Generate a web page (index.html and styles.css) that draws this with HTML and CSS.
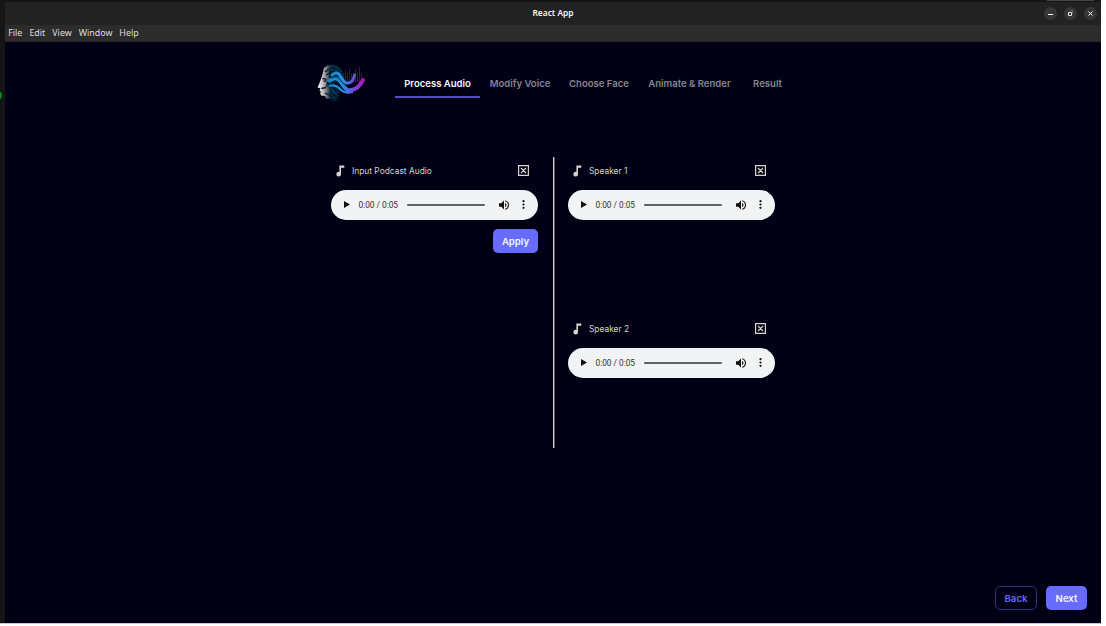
FILE: index.html
```html
<!DOCTYPE html>
<html lang="en">
<head>
<meta charset="utf-8">
<title>React App</title>
<link rel="stylesheet" href="styles.css">
</head>
<body>
<svg class="defs" width="0" height="0">
  <symbol id="note" viewBox="0 0 9 12"><path d="M3.4 0.4H8.3V2.8H5V9a2.3 2.3 0 1 1-1.6-2.1z"/></symbol>
  <symbol id="close" viewBox="0 0 11 11"><path d="M.6.6h9.8v9.8H.6zM3 3l5 5M8 3l-5 5" fill="none" stroke="currentColor" stroke-width="1.2"/></symbol>
  <symbol id="play" viewBox="0 0 6 7"><path d="M0 0l6 3.5L0 7z"/></symbol>
  <symbol id="volume" viewBox="3 3 18 18"><path d="M3 9v6h4l5 5V4L7 9H3zm13.5 3A4.5 4.5 0 0 0 14 7.97v8.05A4.5 4.5 0 0 0 16.5 12zM14 3.23v2.06a7 7 0 0 1 0 13.42v2.06a9 9 0 0 0 0-17.54z"/></symbol>
  <symbol id="more" viewBox="0 0 3 9"><circle cx="1.5" cy="1.2" r="1.1"/><circle cx="1.5" cy="4.5" r="1.1"/><circle cx="1.5" cy="7.8" r="1.1"/></symbol>
</svg>
<div class="desktop">
  <i class="dock-dot"></i>
  <i class="top-chip"></i>
  <div class="window">
    <header class="titlebar">
      <span class="title">React App</span>
      <div class="controls">
        <span class="control"><svg width="13" height="13" viewBox="0 0 13 13"><path d="M4 7.5h5" stroke="#fff" fill="none"/></svg></span>
        <span class="control"><svg width="13" height="13" viewBox="0 0 13 13"><path d="M4.5 5.5h3v3h-3z" stroke="#ddd" fill="none"/><path d="M6 3.5h2.5V7" stroke="#666" fill="none"/></svg></span>
        <span class="control"><svg width="13" height="13" viewBox="0 0 13 13"><path d="M4.5 4.5l4 4M8.5 4.5l-4 4" stroke="#fff" fill="none"/></svg></span>
      </div>
    </header>
    <nav class="menubar"><span>File</span><span>Edit</span><span>View</span><span>Window</span><span>Help</span></nav>
    <main class="app">
      <div class="steps">
        <svg class="logo" width="48" height="38" viewBox="0 0 48 38">
          <defs>
            <linearGradient id="wave" x1="12" y1="0" x2="47" y2="0" gradientUnits="userSpaceOnUse"><stop offset="0" stop-color="#0c8fc4"/><stop offset=".4" stop-color="#268fe4"/><stop offset=".68" stop-color="#6a50dc"/><stop offset="1" stop-color="#b010ae"/></linearGradient>
            <linearGradient id="face" x1="2" y1="0" x2="15" y2="0" gradientUnits="userSpaceOnUse"><stop offset="0" stop-color="#eee"/><stop offset=".45" stop-color="#9b9ea3"/><stop offset=".85" stop-color="#1a2c3c"/></linearGradient>
          </defs>
          <path d="M7 4Q11-1 17 .5q8 1 9 10l-1 13-3 8-1 5-6 1-5-6z" fill="#061b2e"/>
          <path d="M7 4Q10 .5 14 1l-2 8 1 6-2 5 2 6-1 4 2 5-5-.5-1-2.500-3.500-.3-1.300-2 .6-2-1.300-1.500 1-2-3-.8 2.200-5L5 12z" fill="url(#face)"/>
          <path d="M5.500 14.500l4 .8M6.500 17h3M4.500 24.500l4.500-1M8 29l4 2M8 8l4-3M9 11l4-2M10.500 18l-1 5" stroke="#10131d" stroke-width="1.300" fill="none"/>
          <path d="M13 3q7-2 11 5M14 6q7-1 10 5M12 26q2 6 6 8M16 26q1 4 4 5M14 24q2 6 6 5" stroke="#125273" stroke-width="1" fill="none" stroke-dasharray="2 .7"/>
          <path d="M26.500 9v7M28.500 6v10M30.500 9v9M32.500 5v12M34.500 9v8" stroke="#0a3c63" stroke-width=".8" fill="none"/>
          <path d="M36.500 9v9M38.500 5v13M40.500 9v9M42.500 3v16M44.500 9v8" stroke="#541069" stroke-width=".8" fill="none"/>
          <path d="M15 11Q20 6 24 13t7 6q5 0 6.500-8" stroke="url(#wave)" stroke-width="3" fill="none" stroke-linecap="round"/>
          <path d="M13 16.500Q20 11 25 19.500t9 6.500q8-1 12-10" stroke="url(#wave)" stroke-width="4" fill="none" stroke-linecap="round"/>
          <path d="M12 22q6-2 11 3t13 3M35 26q7-3 9-9" stroke="url(#wave)" stroke-width="2.200" fill="none"/>
          <path d="M14 14q6-3 10 3t9 6M18 20q4 0 8 5" stroke="#04102a" stroke-width=".8" fill="none"/>
        </svg>
        <nav class="tabs"><a class="tab process active">Process Audio</a><a class="tab modify">Modify Voice</a><a class="tab choose">Choose Face</a><a class="tab animate">Animate &amp; Render</a><a class="tab result">Result</a></nav>
      </div>
      <div class="workspace">
        <section class="column input">
          <article class="track">
            <div class="track-head"><svg class="note"><use href="#note"/></svg><span>Input Podcast Audio</span><svg class="close"><use href="#close"/></svg></div>
            <div class="player"><svg class="play"><use href="#play"/></svg><span class="time">0:00 / 0:05</span><i class="seek"></i><svg class="volume"><use href="#volume"/></svg><svg class="more"><use href="#more"/></svg></div>
          </article>
          <button class="button apply">Apply</button>
        </section>
        <section class="column">
          <article class="track">
            <div class="track-head"><svg class="note"><use href="#note"/></svg><span>Speaker 1</span><svg class="close"><use href="#close"/></svg></div>
            <div class="player"><svg class="play"><use href="#play"/></svg><span class="time">0:00 / 0:05</span><i class="seek"></i><svg class="volume"><use href="#volume"/></svg><svg class="more"><use href="#more"/></svg></div>
          </article>
          <article class="track">
            <div class="track-head"><svg class="note"><use href="#note"/></svg><span>Speaker 2</span><svg class="close"><use href="#close"/></svg></div>
            <div class="player"><svg class="play"><use href="#play"/></svg><span class="time">0:00 / 0:05</span><i class="seek"></i><svg class="volume"><use href="#volume"/></svg><svg class="more"><use href="#more"/></svg></div>
          </article>
        </section>
      </div>
      <footer class="actions"><button class="button outline">Back</button><button class="button">Next</button></footer>
    </main>
  </div>
</div>
</body>
</html>
```

FILE: styles.css
```css
* { box-sizing: border-box; }
body { margin: 0; background: #fff; font-family: Inter, sans-serif; overflow: hidden; }
svg { display: block; flex: none; fill: currentColor; }
.defs { position: absolute; }
.desktop { position: relative; width: 1101px; height: 624px; padding: 2px 0 0 5px; background: #151515; border-bottom: 1px solid #c9c5cf; overflow: hidden; }
.dock-dot { position: absolute; left: -7px; top: 91px; width: 9px; height: 9px; border-radius: 50%; background: #078b15; }
.top-chip { position: absolute; left: 1047px; top: 0; width: 47px; height: 1px; background: #444; }
.window { height: 621px; display: flex; flex-direction: column; }
.titlebar { height: 23px; flex: none; display: grid; grid-template-columns: 1fr auto 1fr; align-items: center; background: #222; color: #f5f5f5; }
.title { grid-column: 2; padding-bottom: 1px; font: 600 8.4px/12px "Noto Sans", sans-serif; }
.controls { justify-self: end; display: flex; gap: 7px; padding: 0 4px 1px 0; }
.control { width: 13px; height: 13px; border-radius: 50%; background: #373737; }
.menubar { height: 17px; flex: none; display: flex; align-items: center; gap: 7px; padding-left: 3.2px; background: #2c2c2c; border-bottom: 1px solid #252525; color: #ddd; font: 8.9px/12px "Noto Sans", sans-serif; }
.app { flex: 1; display: flex; flex-direction: column; background: #010014; }
.steps { display: flex; padding: 21px 0 0 312px; height: 115px; }
.logo { margin-top: 1px; }
.tabs { display: flex; margin-left: 30px; height: 35px; font-size: 9.55px; font-weight: 600; color: #86858e; }
.tab { height: 35px; line-height: 41px; text-align: center; white-space: nowrap; }
.tab.active { color: #f4f4f8; border-bottom: 2px solid #4d50bd; }
.process { width: 85px; }
.modify { width: 80px; }
.choose { width: 78px; }
.animate { width: 103px; }
.result { width: 53px; }
.workspace { display: flex; height: 291px; margin-left: 326px; }
.column { width: 237px; }
.input { width: 223px; margin-right: 14px; padding-right: 15px; border-right: 1px solid #d0d0cf; box-shadow: 1px 0 #55555f; }
.track { width: 207px; height: 158px; }
.input .track { height: 72px; }
.track-head { height: 33px; display: flex; align-items: center; padding: 0 9px 6px 5px; color: #d5d5ce; font-size: 8.4px; }
.track-head span { padding-top: 1px; }
.note { width: 9px; height: 12px; margin-right: 7px; }
.close { width: 11px; height: 11px; margin-left: auto; }
.player { width: 207px; height: 29.5px; border-radius: 15px; background: #f1f3f4; color: #111; display: flex; align-items: center; padding: 0 13px; }
.play { width: 6px; height: 7px; }
.time { width: 40px; margin-left: 8.5px; font: 8.3px/12px Roboto, sans-serif; white-space: nowrap; color: #303030; }
.seek { width: 78px; height: 2px; margin-left: 8.5px; background: #606163; border-radius: 1px; }
.volume { width: 10px; height: 10px; margin-left: 14px; }
.more { width: 3px; height: 9px; margin-left: 12.5px; }
.button { height: 24px; border: 0; border-radius: 5px; padding: 0 10px; background: #676cff; color: #f5f5ff; font: 600 9.6px/23px Inter, sans-serif; }
.apply { display: block; width: 45px; margin-left: auto; padding: 0; }
.outline { background: transparent; border: 1px solid #30327a; color: #656af4; }
.actions { display: flex; justify-content: flex-end; gap: 9px; margin-top: auto; padding: 0 14px 13px 0; }
.actions .button { width: 41px; padding: 0; }
.actions .outline { width: 42px; }
```
